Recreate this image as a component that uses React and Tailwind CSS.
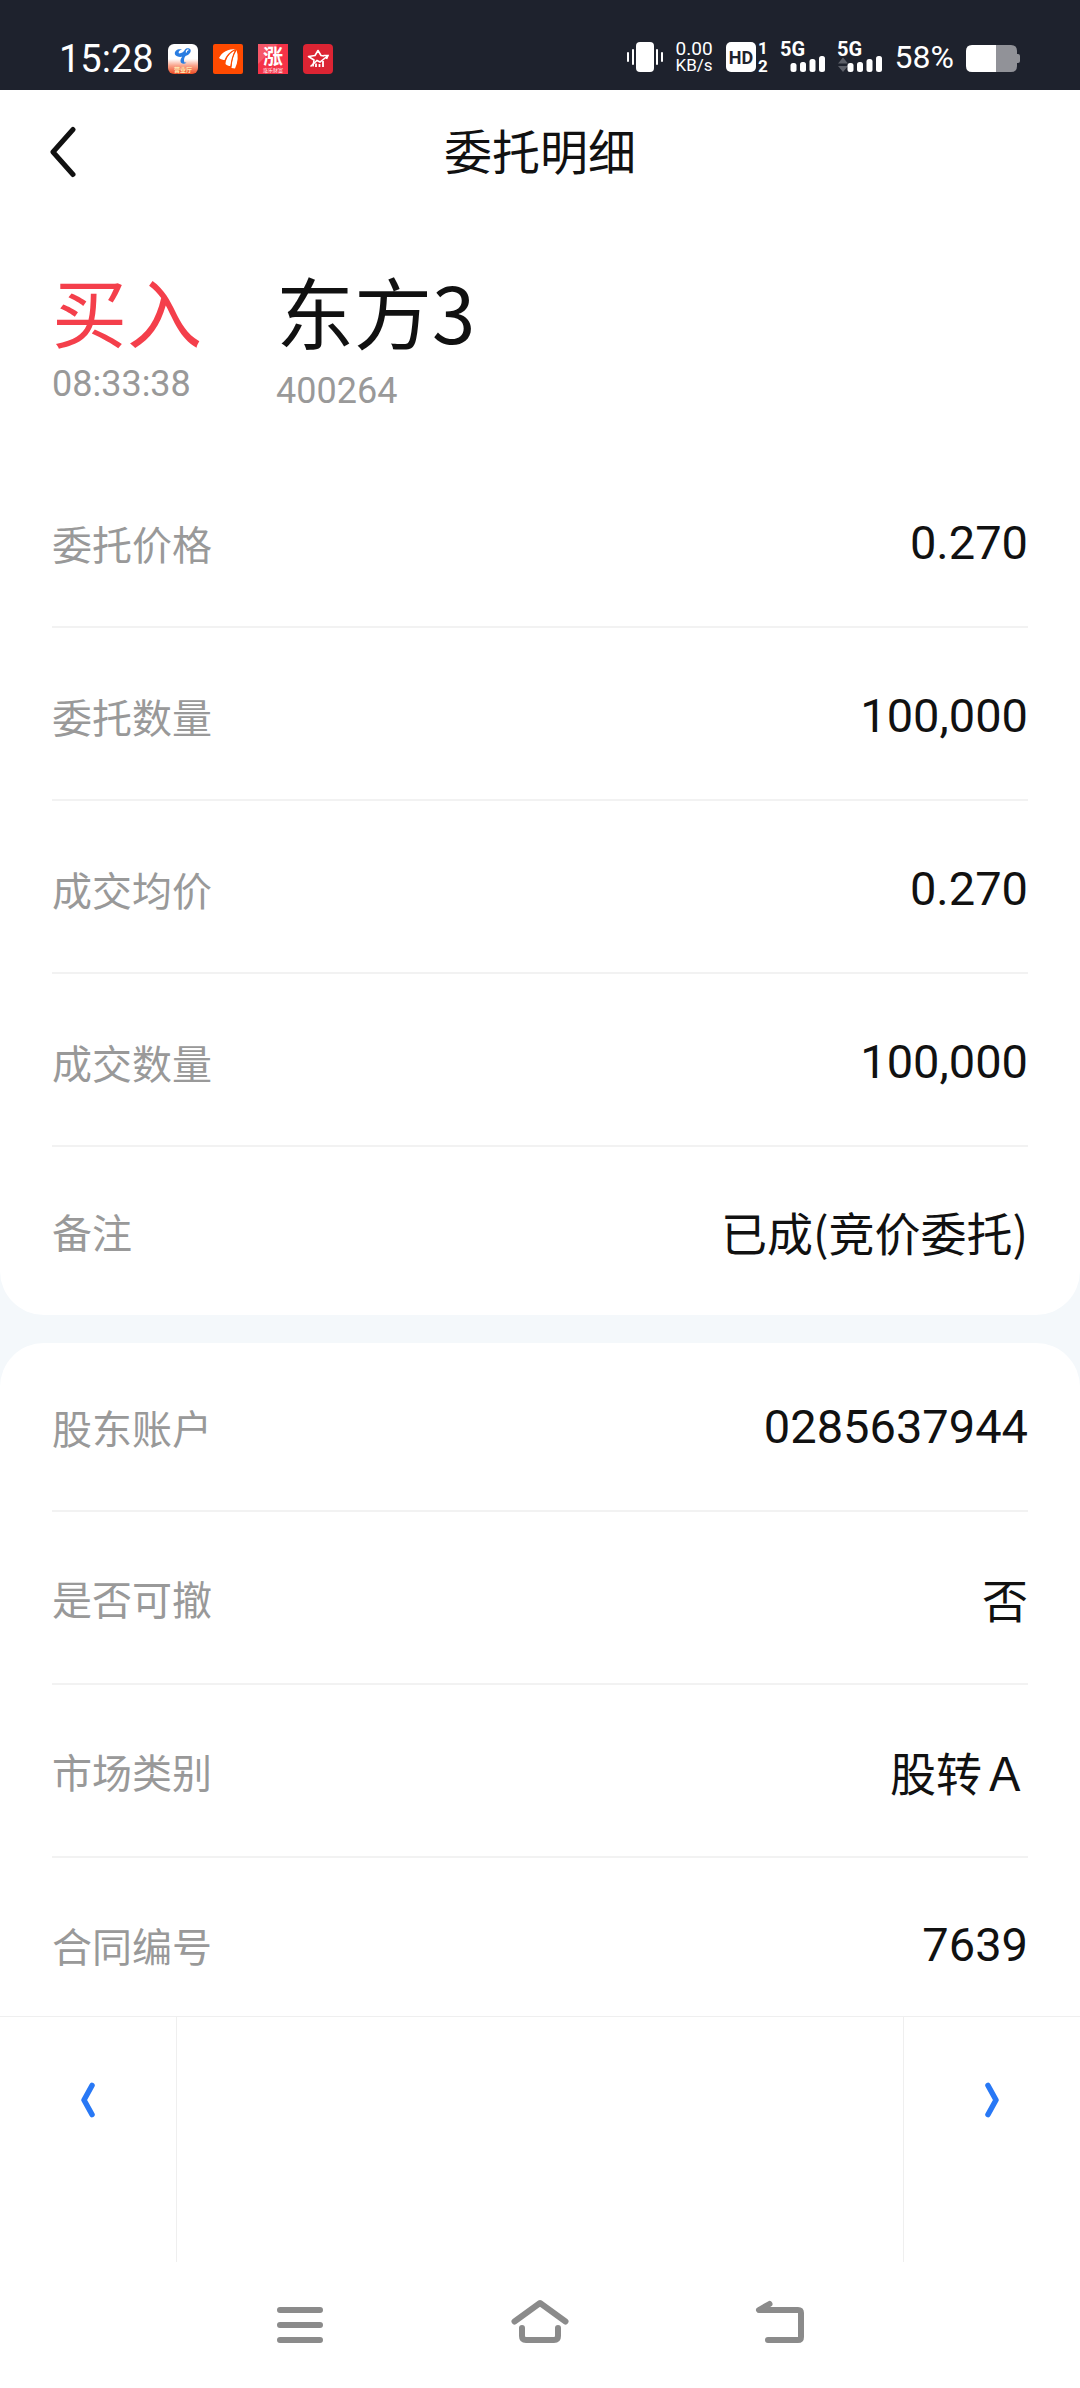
const orderRows = [
  { label: "委托价格", value: "0.270" },
  { label: "委托数量", value: "100,000" },
  { label: "成交均价", value: "0.270" },
  { label: "成交数量", value: "100,000" },
  { label: "备注", value: "已成(竞价委托)", cjk: true },
];

const accountRows = [
  { label: "股东账户", value: "0285637944" },
  { label: "是否可撤", value: "否", cjk: true },
  { label: "市场类别", value: "股转Ａ", cjk: true },
  { label: "合同编号", value: "7639" },
];

function AppIcons() {
  return (
    <div className="flex gap-[15px]">
      {/* Telecom */}
      <svg className="size-[30px] overflow-visible" viewBox="0 0 30 30">
        <defs>
          <linearGradient id="telecom" x1="0" y1="0" x2="0" y2="1">
            <stop offset="0.5" stopColor="#fff" />
            <stop offset="0.72" stopColor="#f9a48c" />
            <stop offset="1" stopColor="#ee4a22" />
          </linearGradient>
        </defs>
        <rect width="30" height="30" rx="6" fill="url(#telecom)" />
        <path d="M7 10.500C6 6.500 10 4.500 14 5.500C11 6.500 10 8 11 9.500C14 9 16 8 17 5.500C18.500 3.500 21.500 4 22.500 5.500C23.500 8 21 11 17.500 12C16 14 15.500 16.500 16.500 18.500L18.500 18.500C16.500 20.500 12.500 20 12.500 17C12.500 15 13.500 14 14 12.800C11 13.200 8 12.500 7 10.500Z" fill="#2a7de1" />
        <path d="M18.500 8.500C18 7 19 5.800 20.500 6" fill="none" stroke="#fff" strokeWidth="1.200" />
        <text x="15" y="28" textAnchor="middle" fontSize="6" fontWeight="700" fill="#ffe9b0" fontFamily="Noto Sans CJK SC, sans-serif">
          营业厅
        </text>
      </svg>
      {/* Eastmoney */}
      <svg className="size-[30px]" viewBox="0 0 30 30">
        <rect width="30" height="30" rx="2" fill="#ff4a00" />
        <path d="M6 14C9 8 15 5 23 5C17 8 14 12 12 16C10 16 8 15.500 6 14Z" fill="#fff" />
        <path d="M12.500 20C13 14 16 9 22 6C20 11 18.500 16 17.500 22C15.500 22 14 21.500 12.500 20Z" fill="#fff" />
        <path d="M18.500 24C18.500 17 20 11 23.500 6C25.500 12 25 18 22 24.500Z" fill="#fff" />
        <path d="M12 16.500C14 11 17 8 22.500 5.500M18 22.500C18.500 16 20 11 23 6" fill="none" stroke="#ff4a00" strokeWidth="1.200" />
      </svg>
      {/* Limit-up */}
      <svg className="size-[30px] overflow-visible" viewBox="0 0 30 30">
        <rect width="30" height="30" fill="#f53247" />
        <path d="M0 0H20L0 20Z" fill="#fff" opacity="0.18" />
        <text x="15" y="20" textAnchor="middle" fontSize="20" fontWeight="700" fill="#fff" fontFamily="Noto Sans CJK SC, sans-serif">
          涨
        </text>
        <text x="15" y="28" textAnchor="middle" fontSize="5" fill="#fff" fontFamily="Noto Sans CJK SC, sans-serif">
          涨乐财富
        </text>
      </svg>
      {/* Star broker */}
      <svg className="size-[30px]" viewBox="0 0 30 30">
        <rect width="30" height="30" rx="4" fill="#dc2433" />
        <path
          d="M10 22.500L11 16L5.500 12.500L12 11.500L15 6.500L18 11.500L21 12"
          fill="none"
          stroke="#fff"
          strokeWidth="1.600"
          strokeLinejoin="round"
        />
        <path d="M7.500 22.500L14 16.500L17 18L24.500 12M20.500 11.500L25 11.500L23.500 15" fill="none" stroke="#fff" strokeWidth="1.600" />
        <path d="M13 23V19.500M16.500 23V20M20 23V17" stroke="#fff" strokeWidth="1.800" />
      </svg>
    </div>
  );
}

function Signal({ data }) {
  return (
    <svg className="h-[30px] w-[45px] overflow-visible" viewBox="0 0 45 30" fill="#fff">
      <text x="-1" y="14" fontSize="20" fontWeight="700" fontFamily="Roboto, sans-serif">
        5G
      </text>
      {data && <path d="M5 15.500L10 21.500H0ZM5 30L0 24H10Z" fill="#5d6069" />}
      <rect x="9.500" y="21" width="6" height="9" rx="2.500" />
      <rect x="19" y="20" width="6" height="10" rx="2.500" />
      <rect x="28.500" y="17" width="6" height="13" rx="2.500" />
      <rect x="38" y="14" width="6" height="16" rx="2.500" />
    </svg>
  );
}

function StatusBar() {
  return (
    <div className="flex h-[90px] shrink-0 items-end justify-between bg-[#1e222d] pr-[60px] pb-4 pl-[59px] text-white">
      <div className="flex items-center gap-[14px]">
        <span className="font-[Roboto,sans-serif] text-[38px]/[28px]">15:28</span>
        <AppIcons />
      </div>
      <div className="flex items-center gap-3">
        <svg className="h-[30px] w-9" viewBox="0 0 36 30" fill="#fff">
          <rect x="9" width="18" height="30" rx="4" />
          <path d="M1 11V19M6 8V22M30 8V22M35 11V19" stroke="#fff" strokeWidth="2" strokeLinecap="round" />
        </svg>
        <div className="flex w-[39px] flex-col items-center font-[Roboto,sans-serif]">
          <span className="text-[19px]/[17px]">0.00</span>
          <span className="text-[17px]/[17px]">KB/s</span>
        </div>
        <svg className="h-[30px] w-[43px] overflow-visible" viewBox="0 0 43 30" fontFamily="Roboto, sans-serif" fontWeight="700">
          <rect width="30" height="30" rx="5" fill="#fff" />
          <text x="15" y="21.500" textAnchor="middle" fontSize="18" fill="#1e222d">
            HD
          </text>
          <text x="37" y="12" textAnchor="middle" fontSize="17" fill="#fff">
            1
          </text>
          <text x="37" y="30" textAnchor="middle" fontSize="17" fill="#fff">
            2
          </text>
        </svg>
        <Signal />
        <Signal data />
        <span className="font-[Roboto,sans-serif] text-[32px]/[28px]">58%</span>
        <svg className="h-[30px] w-[54px]" viewBox="0 0 54 30">
          <path d="M50 12H52Q54 12 54 14V19Q54 21 52 21H50Z" fill="#919298" />
          <path d="M30 3H45Q51 3 51 9V24Q51 30 45 30H30Z" fill="#919298" />
          <path d="M6 3H30V30H6Q0 30 0 24V9Q0 3 6 3Z" fill="#fff" />
        </svg>
      </div>
    </div>
  );
}

function DetailRow({ label, value, cjk, className }) {
  return (
    <div className={`flex items-center justify-between border-[#f2f2f2] ${className}`}>
      <dt className="text-[40px]/[60px] text-[#999]">{label}</dt>
      <dd
        className={
          cjk
            ? "text-[46px]/[60px]"
            : "font-[Roboto,sans-serif] text-[47px]/[60px]"
        }
      >
        {value}
      </dd>
    </div>
  );
}

export default function App() {
  return (
    <div className="flex h-screen flex-col bg-white font-['Noto_Sans_CJK_SC',sans-serif] text-[#111]">
      <StatusBar />

      <header className="grid h-[124px] shrink-0 grid-cols-[1fr_auto_1fr] items-center px-12">
        <button type="button" aria-label="返回" className="w-8">
          <svg className="h-[52px] w-[30px]" viewBox="0 0 30 52" fill="none" stroke="#111" strokeWidth="5" strokeLinecap="round" strokeLinejoin="round">
            <path d="M25 3.500L5 26L25 48.500" />
          </svg>
        </button>
        <h1 className="pb-1.5 text-[48px]/[60px]">委托明细</h1>
      </header>

      <main className="min-h-0 flex-1 overflow-y-auto bg-[#f4f8fb] [scrollbar-width:none]">
        <section className="rounded-b-[44px] bg-white px-[52px]">
          <div className="flex h-[241px] pt-[54px]">
            <div className="w-[224px]">
              <p className="text-[75px]/[84px] text-[#f43f4b]">买入</p>
              <p className="font-[Roboto,sans-serif] text-[36px]/[64px] text-[#999]">08:33:38</p>
            </div>
            <div>
              <h2 className="text-[78px]/[84px]">东方3</h2>
              <p className="font-[Roboto,sans-serif] text-[36px]/[78px] text-[#999]">400264</p>
            </div>
          </div>
          <dl>
            {orderRows.map((row) => (
              <DetailRow key={row.label} {...row} className="h-[173px] border-b-2 pt-1 last:h-[168px] last:border-b-0 last:pt-0" />
            ))}
          </dl>
        </section>

        <section className="mt-7 rounded-t-[44px] bg-white px-[52px]">
          <dl>
            {accountRows.map((row) => (
              <DetailRow key={row.label} {...row} className="h-[173px] border-b-2 first:h-[169px] last:border-b-0" />
            ))}
          </dl>
        </section>
      </main>

      <div className="flex h-[246px] shrink-0 justify-between border-t border-[#efefef]">
        <div className="w-[177px] border-r border-[#efefef]">
          <button type="button" aria-label="上一条" className="flex h-[165px] w-full items-center justify-center">
            <svg className="h-9 w-4" viewBox="0 0 16 36" fill="none" stroke="#2878f5" strokeWidth="5.500" strokeLinecap="round" strokeLinejoin="round">
              <path d="M12 3.500L4 18L12 32.500" />
            </svg>
          </button>
        </div>
        <div className="w-[177px] border-l border-[#efefef]">
          <button type="button" aria-label="下一条" className="flex h-[165px] w-full items-center justify-center">
            <svg className="h-9 w-4" viewBox="0 0 16 36" fill="none" stroke="#2878f5" strokeWidth="5.500" strokeLinecap="round" strokeLinejoin="round">
              <path d="M4 3.500L12 18L4 32.500" />
            </svg>
          </button>
        </div>
      </div>

      <nav className="mx-auto grid h-[126px] w-2/3 shrink-0 grid-cols-3 place-items-center">
        <button type="button" aria-label="最近任务">
          <svg className="size-[60px]" viewBox="0 0 60 60" fill="none" stroke="#8b8b8b" strokeWidth="6" strokeLinecap="round">
            <path d="M10 15H50M10 30H50M10 45H50" />
          </svg>
        </button>
        <button type="button" aria-label="主页">
          <svg className="size-[60px]" viewBox="0 0 60 60" fill="none" stroke="#8b8b8b" strokeWidth="6" strokeLinecap="round" strokeLinejoin="round">
            <path d="M4.500 26.500L30 8L55.500 26.500" />
            <path d="M12 33V41Q12 45 16 45H44Q48 45 48 41V33" />
          </svg>
        </button>
        <button type="button" aria-label="后退">
          <svg className="size-[60px]" viewBox="0 0 60 60" fill="none" stroke="#8b8b8b" strokeWidth="6" strokeLinecap="round" strokeLinejoin="round">
            <path d="M19.500 9L9 15H48Q51 15 51 18V42Q51 45 48 45H18" />
          </svg>
        </button>
      </nav>
    </div>
  );
}
